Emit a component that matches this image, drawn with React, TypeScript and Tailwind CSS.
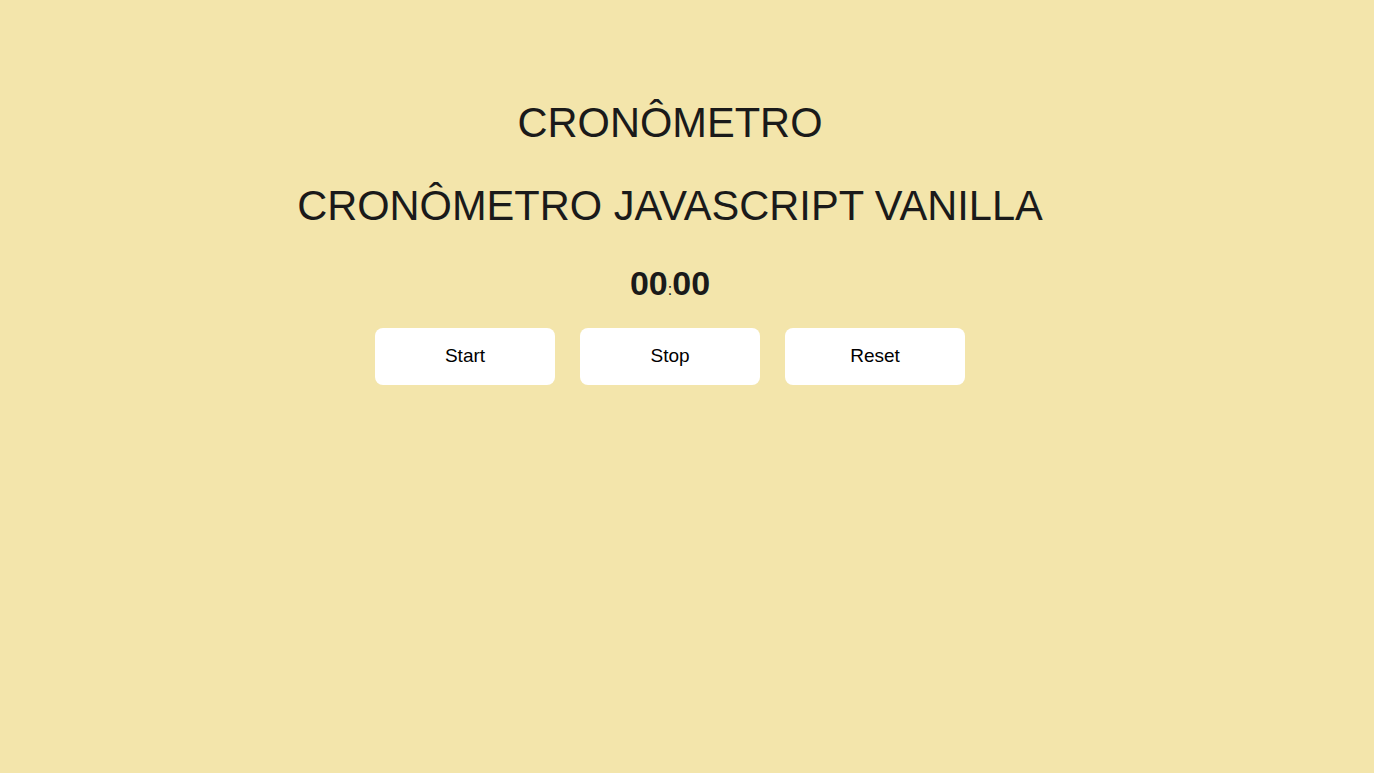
import React from "react";

export default function App() {
  return (
    <div
      className="min-h-[773px] w-full bg-[#f3e5ab] flex flex-col items-center pr-[34px] text-[#1a1a1a]"
      style={{ fontFamily: '"Liberation Sans", Arial, sans-serif' }}
    >
      <h1 className="mt-[99px] text-[41.6px] leading-[48px] font-normal">CRONÔMETRO</h1>
      <h2 className="mt-[35px] text-[41.6px] leading-[48px] font-normal">CRONÔMETRO JAVASCRIPT VANILLA</h2>
      <div className="mt-[34px] text-[34px] leading-[39px] font-bold">
        00<span className="text-[16px] font-normal">:</span>00
      </div>
      <div className="mt-[19px] flex gap-[25px]">
        {["Start", "Stop", "Reset"].map((l) => (
          <button
            key={l}
            className="w-[180px] h-[57px] bg-white rounded-[8px] text-[19px] text-black"
          >
            {l}
          </button>
        ))}
      </div>
    </div>
  );
}
